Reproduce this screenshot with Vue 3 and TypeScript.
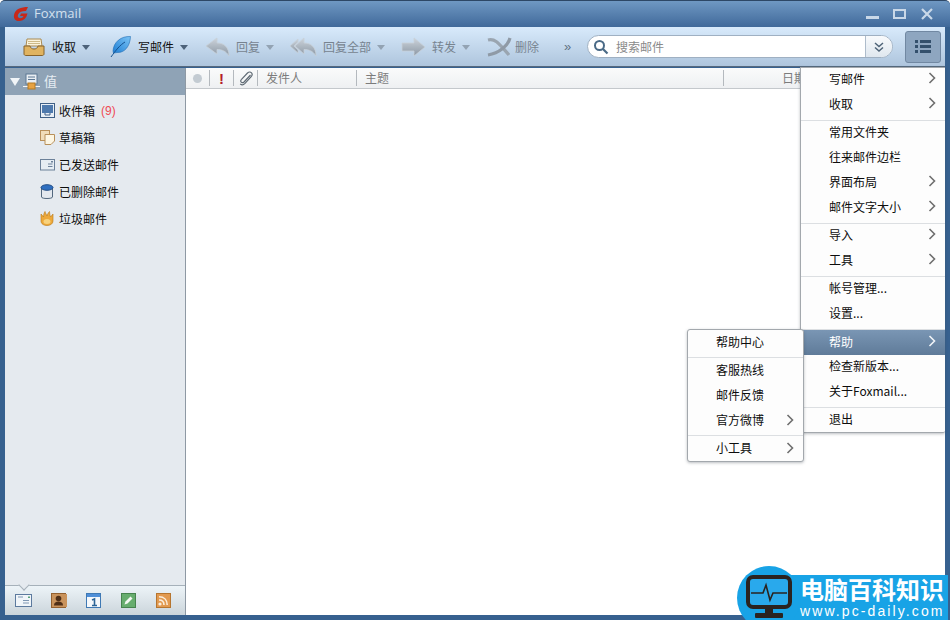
<script setup lang="ts">
interface MenuRow {
  label?: string
  arrow?: boolean
  sep?: boolean
  active?: boolean
}

const mainMenu: MenuRow[] = [
  { label: '写邮件', arrow: true },
  { label: '收取', arrow: true },
  { sep: true },
  { label: '常用文件夹' },
  { label: '往来邮件边栏' },
  { label: '界面布局', arrow: true },
  { label: '邮件文字大小', arrow: true },
  { sep: true },
  { label: '导入', arrow: true },
  { label: '工具', arrow: true },
  { sep: true },
  { label: '帐号管理...' },
  { label: '设置...' },
  { sep: true },
  { label: '帮助', arrow: true, active: true },
  { label: '检查新版本...' },
  { label: '关于Foxmail...' },
  { sep: true },
  { label: '退出' },
]

const helpMenu: MenuRow[] = [
  { label: '帮助中心' },
  { sep: true },
  { label: '客服热线' },
  { label: '邮件反馈' },
  { label: '官方微博', arrow: true },
  { sep: true },
  { label: '小工具', arrow: true },
]
</script>

<template>
  <div class="window">
    <header class="titlebar">
      <svg class="logo" width="16" height="16" viewBox="0 0 16 16">
        <path d="M15 1 C8 1 2 3 1 9 C0.3 13 3 15.5 7 15 C11 14.5 13.5 12 14.5 7.5 L8 7.5 L7 10 L10.5 10 C9.8 11.5 8.5 12.3 7 12.2 C5 12 4.3 10.5 5 8.8 C6 6 9 5 13 5 Z" fill="#c8281a" />
      </svg>
      <span class="app-name">Foxmail</span>
      <div class="win-btns">
        <svg width="14" height="12" viewBox="0 0 14 12"><rect x="0" y="8" width="13" height="3" fill="#c9d8e8" /></svg>
        <svg width="14" height="12" viewBox="0 0 14 12"><rect x="1" y="2" width="11" height="8" fill="none" stroke="#c9d8e8" stroke-width="2" /></svg>
        <svg width="14" height="12" viewBox="0 0 14 12"><path d="M2 1 L12 11 M12 1 L2 11" stroke="#c9d8e8" stroke-width="2.2" /></svg>
      </div>
    </header>

    <div class="toolbar">
      <div class="tool tool-receive">
        <svg width="22" height="20" viewBox="0 0 22 20">
          <path d="M4 2 H18 L19 9 H3 Z" fill="#fbf3dc" stroke="#a98a52" />
          <path d="M5 4.5 H17 M5 6.5 H17" stroke="#cdb987" />
          <path d="M1 9 H7 C7.5 11 9 12 11 12 C13 12 14.5 11 15 9 H21 V17 C21 18 20 18.5 19 18.5 H3 C2 18.5 1 18 1 17 Z" fill="#e0b360" stroke="#86622b" />
        </svg>
        <span class="tool-label strong">收取</span>
        <i class="caret"></i>
      </div>
      <div class="tool tool-write">
        <svg width="21" height="22" viewBox="0 0 21 22">
          <defs>
            <linearGradient id="featherGrad" x1="1" y1="0" x2="0" y2="1">
              <stop offset="0" stop-color="#7cc4f6" />
              <stop offset="1" stop-color="#1f7fd4" />
            </linearGradient>
          </defs>
          <path d="M20.5 0.5 C11 0 3.5 6 3 15 L3.5 17 L7 16.5 C15 17 20 10 20.5 0.5 Z" fill="url(#featherGrad)" stroke="#1f6cb4" stroke-width="0.6" />
          <path d="M15 6 C10 9 6 14 1 21" stroke="#15528f" stroke-width="1" fill="none" />
        </svg>
        <span class="tool-label strong">写邮件</span>
        <i class="caret"></i>
      </div>
      <div class="tool tool-reply">
        <svg width="25" height="20" viewBox="0 0 25 20">
          <defs>
            <linearGradient id="offGrad" x1="0" y1="0" x2="0" y2="1">
              <stop offset="0" stop-color="#cdd4db" />
              <stop offset="1" stop-color="#8b97a4" />
            </linearGradient>
          </defs>
          <path d="M1 9 L12 1 V6 C19 6 24 10 24 19 C21 14 17 12.5 12 12.5 V17 Z" fill="url(#offGrad)" stroke="#c8d0d8" stroke-width="0.8" />
        </svg>
        <span class="tool-label off">回复</span>
        <i class="caret off-caret"></i>
      </div>
      <div class="tool tool-replyall">
        <svg width="28" height="20" viewBox="0 0 28 20">
          <path d="M1 9 L9 2 V5 L5 9 L9 13 V16 Z" fill="url(#offGrad)" stroke="#c8d0d8" stroke-width="0.8" />
          <path d="M6 9 L15 1 V6 C22 6 27 10 27 19 C24 14 20 12.5 15 12.5 V17 Z" fill="url(#offGrad)" stroke="#c8d0d8" stroke-width="0.8" />
        </svg>
        <span class="tool-label off">回复全部</span>
        <i class="caret off-caret"></i>
      </div>
      <div class="tool tool-forward">
        <svg width="25" height="20" viewBox="0 0 25 20">
          <path d="M1 6 H13 V1 L24 10 L13 19 V14 H1 Z" fill="url(#offGrad)" stroke="#c8d0d8" stroke-width="0.8" />
        </svg>
        <span class="tool-label off">转发</span>
        <i class="caret off-caret"></i>
      </div>
      <div class="tool tool-delete">
        <svg width="25" height="20" viewBox="0 0 25 20">
          <path d="M1 3 C9 1 13 8 22 18" fill="none" stroke="#9aa5b0" stroke-width="3.2" />
          <path d="M23 1 C21 9 12 16 1 18" fill="none" stroke="#8f9aa6" stroke-width="3.2" />
        </svg>
        <span class="tool-label off">删除</span>
      </div>
      <span class="more">»</span>
      <div class="search">
        <svg width="16" height="16" viewBox="0 0 16 16">
          <circle cx="6.5" cy="6.5" r="4.5" fill="none" stroke="#4a6a86" stroke-width="2" />
          <path d="M10 10 L14.5 14.5" stroke="#4a6a86" stroke-width="2.2" />
        </svg>
        <span class="search-text">搜索邮件</span>
        <div class="search-drop">
          <svg width="12" height="12" viewBox="0 0 12 12">
            <path d="M2 2 L6 5.5 L10 2 M2 6.5 L6 10 L10 6.5" fill="none" stroke="#4f6478" stroke-width="1.5" />
          </svg>
        </div>
      </div>
      <div class="list-btn">
        <svg width="16" height="13" viewBox="0 0 16 13">
          <path d="M0 0 H3 V3 H0 Z M5 0 H16 V3 H5 Z M0 5 H3 V8 H0 Z M5 5 H16 V8 H5 Z M0 10 H3 V13 H0 Z M5 10 H16 V13 H5 Z" fill="#34506c" />
        </svg>
      </div>
    </div>

    <div class="body">
      <aside class="sidebar">
        <div class="account">
          <i class="account-tri"></i>
          <svg width="17" height="17" viewBox="0 0 17 17">
            <rect x="3" y="1" width="11" height="10" fill="#e9eef3" stroke="#5d7894" />
            <path d="M5 4 H12 M5 6.5 H12" stroke="#5d7894" />
            <path d="M0 13.5 H17" stroke="#f2f4f6" />
            <rect x="5" y="10" width="7" height="6" fill="#e6a243" stroke="#b47a24" />
          </svg>
          <span class="account-name">值</span>
        </div>
        <ul class="folders">
          <li>
            <svg width="15" height="15" viewBox="0 0 15 15">
              <rect x="0.5" y="0.5" width="14" height="14" fill="#e8eff6" stroke="#3e5f86" />
              <rect x="2" y="2" width="11" height="8" fill="#4d79ad" />
              <path d="M5 10 V12 H10 V10" fill="none" stroke="#3e5f86" />
            </svg>
            <span>收件箱</span><em>(9)</em>
          </li>
          <li>
            <svg width="15" height="15" viewBox="0 0 15 15">
              <rect x="0.5" y="0.5" width="9" height="10" fill="#f0dcb8" stroke="#b8905a" />
              <path d="M5 4.5 H14.5 V11 L11 14.5 H5 Z" fill="#fdf6e3" stroke="#b8905a" />
            </svg>
            <span>草稿箱</span>
          </li>
          <li>
            <svg width="15" height="13" viewBox="0 0 15 13">
              <rect x="0.5" y="1.5" width="14" height="10.5" fill="#e6edf3" stroke="#6c8199" />
              <path d="M8 6 H12.5 M8 8.5 H12.5" stroke="#6c8199" />
              <rect x="11" y="3" width="2" height="1.5" fill="#6c8199" />
            </svg>
            <span>已发送邮件</span>
          </li>
          <li>
            <svg width="14" height="16" viewBox="0 0 14 16">
              <path d="M1.5 4 V13 C1.5 15 12.5 15 12.5 13 V4 Z" fill="#e3e8ee" stroke="#53687e" />
              <ellipse cx="7" cy="3.5" rx="6" ry="2.8" fill="#2f6fc0" stroke="#234e85" />
            </svg>
            <span>已删除邮件</span>
          </li>
          <li>
            <svg width="14" height="15" viewBox="0 0 14 15">
              <path d="M1 3 C2 4 3 5 3.5 6 C3.5 4 4 2 5 0.5 C5.5 2.5 6.5 3.5 7 5 C7.5 3 8.5 1.5 9.5 0.5 C9.5 2.5 10 4.5 10.5 6 L13 3 V10 C13 13 10 14.5 7 14.5 C4 14.5 1 13 1 10 Z" fill="#eda93b" stroke="#b87818" stroke-width="0.6" />
              <ellipse cx="7" cy="10.5" rx="3.5" ry="2.5" fill="#f8d27c" />
            </svg>
            <span>垃圾邮件</span>
          </li>
        </ul>
        <div class="side-tabs">
          <i class="notch"></i>
          <svg width="17" height="13" viewBox="0 0 17 13">
            <rect x="0.5" y="0.5" width="16" height="12" fill="#f0f5f9" stroke="#5c7a9e" />
            <path d="M3 3 H8 M8 6.5 H14 M8 9 H14" stroke="#7e97b3" />
            <rect x="13" y="2.5" width="2" height="1.5" fill="#56a37c" />
          </svg>
          <svg width="16" height="15" viewBox="0 0 16 15">
            <rect x="0.5" y="0.5" width="14" height="14" fill="#c9935c" stroke="#93602f" />
            <rect x="14" y="1" width="2" height="13" fill="#c9935c" />
            <circle cx="7.5" cy="5.5" r="2.8" fill="#4f2f17" />
            <path d="M3 12.5 C3 9.5 5 8.5 7.5 8.5 C10 8.5 12 9.5 12 12.5 Z" fill="#4f2f17" />
          </svg>
          <svg width="15" height="15" viewBox="0 0 15 15">
            <rect x="0.5" y="0.5" width="14" height="14" fill="#f5f8fb" stroke="#3f79b4" />
            <rect x="1" y="1" width="13" height="3" fill="#4f8fd8" />
            <path d="M6 7 L8.5 6 V12 M6 12.5 H11" fill="none" stroke="#2c6496" stroke-width="1.6" />
          </svg>
          <svg width="15" height="15" viewBox="0 0 15 15">
            <rect x="0.5" y="0.5" width="14" height="14" fill="#67ad6e" stroke="#47834e" />
            <path d="M3.5 11.5 L4.5 8.5 L9.5 3.5 L11.5 5.5 L6.5 10.5 Z" fill="#f4f8f2" />
          </svg>
          <svg width="15" height="15" viewBox="0 0 15 15">
            <rect x="0.5" y="0.5" width="14" height="14" fill="#e29a50" stroke="#b6752f" />
            <circle cx="4" cy="11" r="1.6" fill="#fbeedd" />
            <path d="M3 7 C6 7 8 9 8 12 M3 3.8 C8 3.8 11.2 7 11.2 12" fill="none" stroke="#fbeedd" stroke-width="1.6" />
          </svg>
        </div>
      </aside>

      <main class="content">
        <div class="col-head">
          <div class="col col-dot"><i class="dot"></i></div>
          <div class="col col-flag">!</div>
          <div class="col col-clip">
            <svg width="14" height="15" viewBox="0 0 14 15">
              <path d="M11.5 4 L5 11 C4 12 2.8 11.8 2.2 11.2 C1.5 10.5 1.5 9.3 2.5 8.3 L8.5 2 C10 0.6 11.6 0.8 12.5 1.8 C13.4 2.8 13.4 4.3 12 5.8 L6 12.4 C4.4 14 2.4 14 1.2 12.8" fill="none" stroke="#5f6a74" stroke-width="1.2" />
            </svg>
          </div>
          <div class="col col-from"><span class="col-text">发件人</span></div>
          <div class="col col-subject"><span class="col-text">主题</span></div>
          <div class="col col-date"><span class="col-text">日期</span></div>
        </div>
      </main>
    </div>

    <ul class="menu menu-main">
      <template v-for="(row, i) in mainMenu" :key="i">
        <li v-if="row.sep" class="sep"></li>
        <li v-else :class="['row', { active: row.active }]">
          <span>{{ row.label }}</span>
          <svg v-if="row.arrow" class="chev" width="8" height="12" viewBox="0 0 8 12">
            <path d="M1.5 1 L6.5 6 L1.5 11" fill="none" stroke="currentColor" stroke-width="1.6" />
          </svg>
        </li>
      </template>
    </ul>

    <ul class="menu menu-help">
      <template v-for="(row, i) in helpMenu" :key="i">
        <li v-if="row.sep" class="sep"></li>
        <li v-else class="row">
          <span>{{ row.label }}</span>
          <svg v-if="row.arrow" class="chev" width="8" height="12" viewBox="0 0 8 12">
            <path d="M1.5 1 L6.5 6 L1.5 11" fill="none" stroke="currentColor" stroke-width="1.6" />
          </svg>
        </li>
      </template>
    </ul>

    <div class="mark">
      <div class="mark-bar">
        <div class="mark-title">电脑百科知识</div>
        <div class="mark-url">www.pc-daily.com</div>
      </div>
      <div class="mark-circle">
        <svg width="46" height="44" viewBox="0 0 46 44">
          <rect x="2" y="2" width="42" height="30" rx="5" fill="#29a9ec" stroke="#2a2320" stroke-width="4" />
          <path d="M5 18 H17 L20 10 L24 25 L27 18 H41" fill="none" stroke="#2a2320" stroke-width="1.6" />
          <rect x="19" y="33" width="8" height="6" fill="#2a2320" />
          <rect x="9" y="38" width="28" height="5" rx="1" fill="#2a2320" />
        </svg>
      </div>
    </div>
  </div>
</template>

<style>
html,
body {
  margin: 0;
  background: #fff;
}
</style>

<style scoped>
.window {
  position: relative;
  width: 950px;
  height: 620px;
  box-sizing: border-box;
  display: flex;
  flex-direction: column;
  overflow: hidden;
  border-radius: 5px 5px 0 0;
  border-top: 1px solid #2d4766;
  background: #37618f;
  font-family: "Noto Sans CJK SC", "Liberation Sans", sans-serif;
  font-size: 12px;
  color: #0d0d0d;
}

.titlebar {
  height: 26px;
  flex: none;
  display: flex;
  align-items: center;
  padding: 0 16px 0 13px;
  background: linear-gradient(#6f98c3, #40699a);
}

.logo {
  margin-top: -1px;
}

.app-name {
  margin-left: 5px;
  margin-top: -2px;
  font-family: "Open Sans", "Liberation Sans", sans-serif;
  font-size: 13px;
  color: #d3e0ee;
}

.win-btns {
  margin-left: auto;
  display: flex;
  gap: 13px;
}

.toolbar {
  height: 39px;
  flex: none;
  margin: 0 5px;
  display: flex;
  align-items: center;
  background: linear-gradient(#d8eafb, #aec5dd);
  border-bottom: 1px solid #56697e;
  box-sizing: content-box;
}

.tool {
  flex: none;
  display: flex;
  align-items: center;
}

.tool-receive {
  margin-left: 18px;
}

.tool-write {
  margin-left: 20px;
}

.tool-reply {
  margin-left: 17px;
}

.tool-replyall {
  margin-left: 15px;
}

.tool-forward {
  margin-left: 16px;
}

.tool-delete {
  margin-left: 17px;
}

.tool-label {
  margin-left: 7px;
  line-height: 16px;
  white-space: nowrap;
}

.tool-label.off {
  margin-left: 6px;
}

.tool-delete .tool-label.off {
  margin-left: 3px;
}

.strong {
  color: #111;
}

.off {
  color: #77838f;
}

.caret {
  width: 0;
  height: 0;
  margin-left: 6px;
  margin-top: 2px;
  border: 4px solid transparent;
  border-top: 5px solid #4d6279;
  border-bottom: 0;
}

.off-caret {
  border-top-color: #93a3b3;
}

.more {
  flex: none;
  width: 8px;
  margin-left: 25px;
  font-family: "Liberation Sans", sans-serif;
  color: #5f7184;
  font-size: 13px;
}

.search {
  flex: none;
  margin-left: 15px;
  width: 306px;
  height: 23px;
  box-sizing: border-box;
  display: flex;
  align-items: center;
  padding-left: 5px;
  background: #fff;
  border: 1px solid #9fb0c2;
  border-radius: 12px;
  overflow: hidden;
}

.search-text {
  margin-left: 7px;
  color: #8a8a8a;
}

.search-drop {
  margin-left: auto;
  width: 26px;
  height: 100%;
  display: flex;
  align-items: center;
  justify-content: center;
  border-left: 1px solid #aebccb;
  background: linear-gradient(#f8fafc, #dfe7ef);
}

.list-btn {
  flex: none;
  margin-left: 12px;
  width: 36px;
  height: 32px;
  box-sizing: border-box;
  display: flex;
  align-items: center;
  justify-content: center;
  background: #8ea6c0;
  border: 1px solid #7188a2;
  border-radius: 3px;
}

.body {
  flex: 1;
  min-height: 0;
  margin: 1px 5px 5px;
  display: flex;
}

.sidebar {
  position: relative;
  width: 181px;
  flex: none;
  box-sizing: border-box;
  display: flex;
  flex-direction: column;
  background: #e5eaef;
  border-right: 1px solid #8e99a4;
}

.account {
  height: 27px;
  flex: none;
  display: flex;
  align-items: center;
  padding-left: 5px;
  background: #8fa3b6;
}

.account-tri {
  width: 0;
  height: 0;
  margin-right: 3px;
  border: 5px solid transparent;
  border-top: 8px solid #f1f5f8;
  border-bottom: 0;
}

.account-name {
  margin-left: 4px;
  margin-top: -2px;
  font-size: 13px;
  color: #e6edf3;
}

.folders {
  list-style: none;
  margin: 3px 0 0;
  padding: 0;
  flex: 1;
}

.folders li {
  height: 27px;
  box-sizing: border-box;
  display: flex;
  align-items: center;
  position: relative;
  padding: 0 0 2px 54px;
}

.folders svg {
  position: absolute;
  left: 35px;
}

.folders em {
  margin-left: 6px;
  font-style: normal;
  color: #ef4a55;
  font-family: "Liberation Sans", sans-serif;
}

.side-tabs {
  position: relative;
  height: 30px;
  flex: none;
  box-sizing: border-box;
  display: grid;
  grid-template-columns: repeat(5, 35px);
  align-items: center;
  justify-items: center;
  padding-left: 1px;
  background: linear-gradient(#edf4f8, #cbd5db);
  border-top: 1px solid #a6b1ba;
}

.notch {
  position: absolute;
  left: 15px;
  top: -5px;
  width: 7px;
  height: 7px;
  background: #e5eaef;
  border-right: 1px solid #a6b1ba;
  border-bottom: 1px solid #a6b1ba;
  transform: rotate(45deg);
}

.content {
  flex: 1;
  min-width: 0;
  background: #fff;
}

.col-head {
  height: 21px;
  box-sizing: border-box;
  display: flex;
  align-items: center;
  background: linear-gradient(#fafbfb, #eef0f2);
  border-bottom: 1px solid #c4c8cc;
  color: #7c7c7c;
}

.col {
  height: 16px;
  box-sizing: border-box;
  flex: none;
  display: flex;
  align-items: center;
  border-right: 1px solid #b4b9be;
}

.col-text {
  margin-top: -2px;
}

.col-dot {
  width: 24px;
  justify-content: center;
}

.dot {
  width: 9px;
  height: 9px;
  border-radius: 50%;
  background: #c3cbd2;
}

.col-flag {
  width: 24px;
  justify-content: center;
  color: #b3202a;
  font-family: "Liberation Sans", sans-serif;
  font-size: 15px;
  font-weight: 700;
}

.col-clip {
  width: 24px;
  justify-content: center;
}

.col-from {
  width: 99px;
  padding-left: 8px;
}

.col-subject {
  width: 367px;
  padding-left: 8px;
}

.col-date {
  flex: 1;
  border-right: 0;
  padding-left: 58px;
}

.menu {
  position: absolute;
  margin: 0;
  padding: 0;
  list-style: none;
  box-sizing: border-box;
  background: #fdfdfd;
  border: 1px solid #a3a8ad;
  box-shadow: 0 1px 3px rgba(60, 70, 80, 0.35);
}

.menu-main {
  left: 800px;
  top: 66px;
  width: 145px;
  height: 366px;
  padding-top: 0;
  border-right: 0;
  border-radius: 0 0 2px 2px;
}

.menu-help {
  left: 687px;
  top: 328px;
  width: 117px;
  height: 133px;
  border-radius: 3px;
}

.row {
  height: 25px;
  box-sizing: border-box;
  display: flex;
  align-items: center;
  justify-content: space-between;
  color: #0d0d0d;
}

.menu-main .row {
  padding: 0 9px 5px 28px;
}

.menu-main .row.active {
  padding-bottom: 3px;
}

.menu-help .row {
  padding: 0 9px 2px 28px;
}

.row.active {
  background: linear-gradient(#7a96b4, #5f7b99);
  color: #fff;
}

.sep {
  height: 3px;
  box-sizing: border-box;
  border-bottom: 1px solid #dcdfe2;
}

.chev {
  color: #6f6f6f;
}

.row.active .chev {
  color: #f1f4f7;
}

.mark {
  position: absolute;
  left: 737px;
  top: 565px;
  width: 213px;
  height: 55px;
}

.mark-circle {
  position: absolute;
  left: 0;
  top: 0;
  width: 64px;
  height: 64px;
  border-radius: 50%;
  background: #18a3e6;
  display: flex;
  justify-content: center;
  padding-top: 9px;
  box-sizing: border-box;
}

.mark-bar {
  position: absolute;
  left: 50px;
  top: 9px;
  width: 161px;
  height: 46px;
  box-sizing: border-box;
  padding: 2px 0 0 13px;
  background: #18a3e6;
  color: #fff;
}

.mark-title {
  font-size: 24px;
  line-height: 24px;
  font-weight: 700;
  white-space: nowrap;
}

.mark-url {
  margin-top: 3px;
  font-family: "Liberation Sans", sans-serif;
  font-size: 14px;
  line-height: 14px;
  letter-spacing: 2.1px;
  white-space: nowrap;
}
</style>
